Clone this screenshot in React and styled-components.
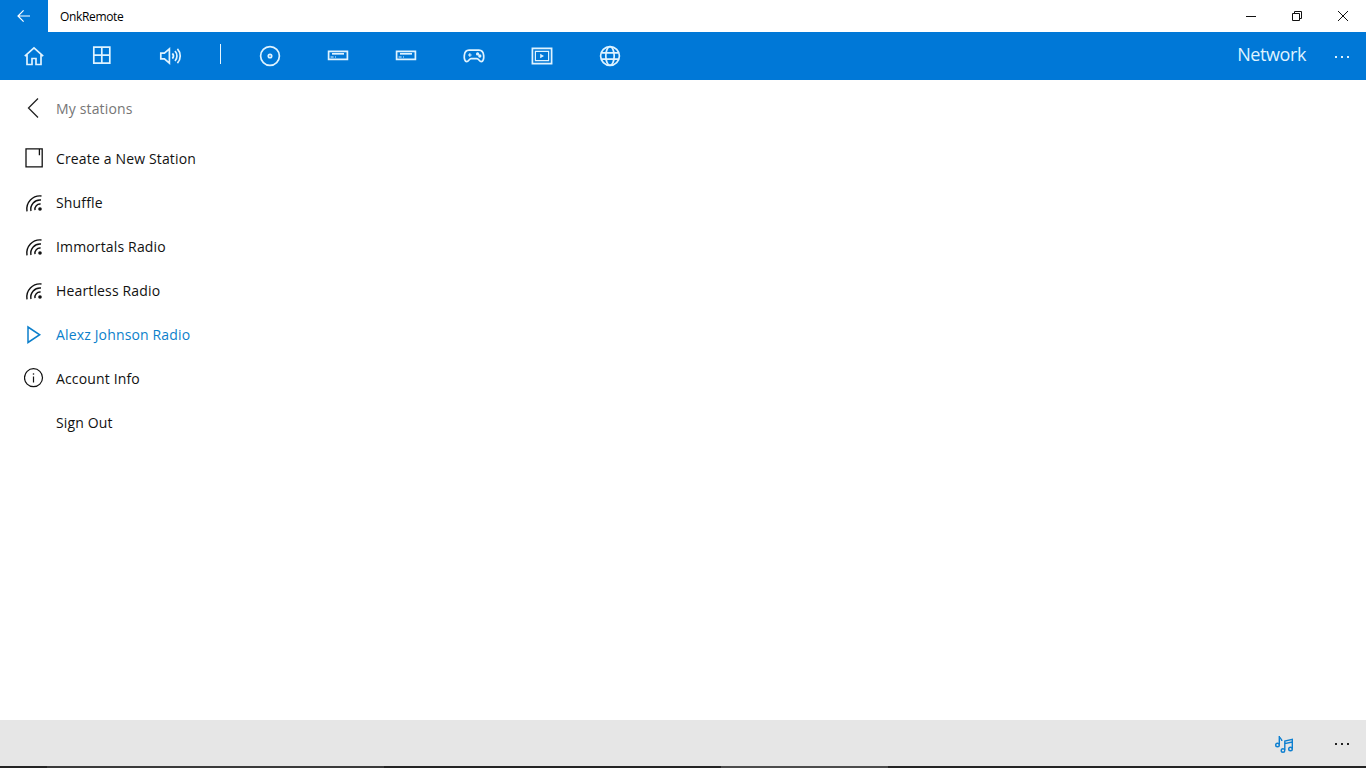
import React from "react";
import styled, { createGlobalStyle } from "styled-components";

const BLUE = "#0078d7";

const stations = ["Shuffle", "Immortals Radio", "Heartless Radio"];

const Line = ({ size = 24, vb = "0 0 24 24", width = 1.7, children }) => (
  <svg width={size} height={size} viewBox={vb} fill="none" stroke="currentColor" strokeWidth={width}>
    {children}
  </svg>
);

const HomeIcon = () => (
  <Line>
    <path d="M2.800 12.200 12 3.800l9.200 8.400M5 10.400v10.100h5v-6h4v6h5V10.400" />
  </Line>
);
const GridIcon = () => (
  <Line>
    <path d="M3.800 3.200h16v16h-16zM11.800 3.200v16M3.800 11.200h16" />
  </Line>
);
const SpeakerIcon = () => (
  <Line>
    <path d="M2.800 9.200h3.600l5-4.400v14.400l-5-4.400H2.800z" />
    <path d="M14.400 9.400a4 4 0 0 1 0 5.200M17 7a7.400 7.400 0 0 1 0 10M19.400 4.800a10.600 10.600 0 0 1 0 14.400" />
  </Line>
);
const DiscIcon = () => (
  <Line>
    <circle cx="12" cy="12" r="9.400" />
    <circle cx="12" cy="12" r="1.700" />
  </Line>
);
const TunerIcon = () => (
  <Line>
    <path d="M2.600 7.400h18.800v8H2.600z" />
    <path d="M6 9.800h12" />
    <path d="M4.600 13h3M9 13h1" strokeWidth="1" />
  </Line>
);
const GamepadIcon = () => (
  <Line>
    <path d="M7 6.200h10c2.600 0 4.400 2.400 4.700 5.400.3 2.800-.5 6-2.400 6-2 0-2.600-3-4.300-3H9c-1.700 0-2.300 3-4.300 3-1.900 0-2.700-3.200-2.400-6C2.600 8.600 4.400 6.200 7 6.200z" />
    <path d="M6 11h3.600M7.800 9.200v3.600" strokeWidth="1.200" />
    <circle cx="15.600" cy="9.900" r=".8" />
    <circle cx="17.800" cy="12" r=".8" />
  </Line>
);
const VideoIcon = () => (
  <Line>
    <path d="M2.400 4.400h19.200v15.200H2.400z" />
    <path d="M5.400 7.400h13.200v9.200H5.400z" strokeWidth="1.200" />
    <path d="M10.200 9.800v4.400l3.800-2.200z" fill="currentColor" stroke="none" />
  </Line>
);
const GlobeIcon = () => (
  <Line>
    <circle cx="12" cy="12" r="9.400" />
    <ellipse cx="12" cy="12" rx="4.200" ry="9.400" />
    <path d="M3.400 8.800h17.200M3.400 15.200h17.200" />
  </Line>
);
const BackArrow = () => (
  <Line size={16} vb="0 0 16 16" width={1.200}>
    <path d="M14 8H2.200M7.600 2.400 2 8l5.600 5.600" />
  </Line>
);
const MinimizeIcon = () => (
  <Line size={10} vb="0 0 10 10" width={1}>
    <path d="M0 5.500h10" />
  </Line>
);
const RestoreIcon = () => (
  <Line size={10} vb="0 0 10 10" width={1}>
    <path d="M.500 2.500h7v7h-7zM2.500 2.500v-2h7v7h-2" />
  </Line>
);
const CloseIcon = () => (
  <Line size={10} vb="0 0 10 10" width={1}>
    <path d="M0 0l10 10M10 0 0 10" />
  </Line>
);
const ChevronIcon = () => (
  <Line size={20} vb="0 0 20 20" width={1.300}>
    <path d="M14 .500 4.500 10l9.500 9.500" />
  </Line>
);
const NewStationIcon = () => (
  <Line size={20} vb="0 0 20 20" width={1.300}>
    <path d="M15.400 .800H2v18h16.200V.800h-2.800v6.400" />
  </Line>
);
const StationIcon = () => (
  <Line size={20} vb="0 0 20 20" width={1.400}>
    <path d="M11 18.200a5.200 5.200 0 0 1 5.600-6.200M7 19a9.200 9.200 0 0 1 10-11M3 19.400A13.200 13.200 0 0 1 17.500 4" />
    <circle cx="16" cy="17" r="1.800" fill="currentColor" stroke="none" />
  </Line>
);
const PlayIcon = () => (
  <Line size={20} vb="0 0 20 20" width={1.500}>
    <path d="M4 3v15.500l11.700-7.750z" />
  </Line>
);
const InfoIcon = () => (
  <Line size={20} vb="0 0 20 20" width={1.200}>
    <circle cx="9.500" cy="9.700" r="9" />
    <path d="M9.500 8.500v6" />
    <circle cx="9.500" cy="6" r=".8" fill="currentColor" stroke="none" />
  </Line>
);
const NotesIcon = () => (
  <Line size={20} vb="0 0 20 20" width={1.400}>
    <path d="M5.300 11.500V3c.3 2.200 2.400 2.600 2.600 5" />
    <circle cx="3.500" cy="12" r="1.800" />
    <path d="M10.800 17V8l7.500-1.600v9.300M10.800 10.600l7.500-1.600" />
    <circle cx="9" cy="17.500" r="1.800" />
    <circle cx="16.500" cy="16" r="1.800" />
  </Line>
);

const GlobalStyle = createGlobalStyle`
  html, body {
    margin: 0;
    height: 100%;
    overflow: hidden;
    background: #fff;
  }
  body {
    font-family: "Open Sans", "Noto Sans", "Liberation Sans", sans-serif;
  }
`;

const Page = styled.div`
  width: 1366px;
  height: 768px;
  display: flex;
  flex-direction: column;
`;

const TitleBar = styled.header`
  height: 32px;
  display: flex;
  align-items: center;
`;

const TitleBack = styled.div`
  width: 48px;
  height: 32px;
  background: ${BLUE};
  color: #fff;
  display: flex;
  align-items: center;
  justify-content: center;
`;

const AppName = styled.span`
  margin-left: 12px;
  font-size: 12px;
  letter-spacing: -0.350px;
  color: #000;
  flex: 1;
`;

const WindowButton = styled.div`
  width: 46px;
  height: 32px;
  display: flex;
  align-items: center;
  justify-content: center;
  color: #111;
`;

const NavBar = styled.nav`
  height: 48px;
  background: ${BLUE};
  color: #dff3ff;
  display: flex;
  align-items: center;
`;

const NavButton = styled.div`
  width: 68px;
  height: 48px;
  display: flex;
  align-items: center;
  justify-content: center;
`;

const NavSeparator = styled.div`
  width: 1px;
  height: 20px;
  margin: 0 15px 4px 16px;
  background: #e6f6ff;
`;

const NavTitle = styled.span`
  margin-left: auto;
  font-size: 18px;
  letter-spacing: -0.400px;
  color: #dff3ff;
  position: relative;
  top: -2px;
`;

const More = styled.div`
  width: 48px;
  margin-left: ${(p) => p.$gap || 0}px;
  margin-top: 2px;
  display: flex;
  justify-content: center;
  gap: 4px;
  color: ${(p) => p.$color};
`;

const Dot = styled.i`
  width: 2px;
  height: 2px;
  background: currentColor;
`;

const Content = styled.main`
  flex: 1;
  padding: 6px 0 0 24px;
`;

const Row = styled.div`
  height: 44px;
  display: flex;
  align-items: center;
  gap: 12px;
  font-size: 14px;
  letter-spacing: 0.150px;
  color: ${(p) => p.$color || "#111"};
`;

const Header = styled(Row)`
  margin-bottom: 6px;
`;

const RowIcon = styled.span`
  width: 20px;
  height: 20px;
  display: flex;
  color: ${(p) => p.$color || "inherit"};
`;

const Footer = styled.footer`
  height: 46px;
  background: #e6e6e6;
  display: flex;
  align-items: center;
  justify-content: flex-end;
`;

const FooterButton = styled.div`
  width: 20px;
  height: 20px;
  color: #0d7fd0;
  margin-right: 24px;
`;

const TaskStrip = styled.div`
  height: 2px;
  display: flex;
`;

const TaskSegment = styled.div`
  width: ${(p) => p.$w}px;
  background: ${(p) => p.$bg};
`;

const segments = [
  [47, "#242424"],
  [337, "#3a3a3a"],
  [337, "#242424"],
  [167, "#4c4c4c"],
  [478, "#242424"],
];

const Dots = ({ color, gap }) => (
  <More $color={color} $gap={gap}>
    <Dot />
    <Dot />
    <Dot />
  </More>
);

export default function App() {
  return (
    <Page>
      <GlobalStyle />
      <TitleBar>
        <TitleBack>
          <BackArrow />
        </TitleBack>
        <AppName>OnkRemote</AppName>
        <WindowButton>
          <MinimizeIcon />
        </WindowButton>
        <WindowButton>
          <RestoreIcon />
        </WindowButton>
        <WindowButton>
          <CloseIcon />
        </WindowButton>
      </TitleBar>
      <NavBar>
        <NavButton>
          <HomeIcon />
        </NavButton>
        <NavButton>
          <GridIcon />
        </NavButton>
        <NavButton>
          <SpeakerIcon />
        </NavButton>
        <NavSeparator />
        <NavButton>
          <DiscIcon />
        </NavButton>
        <NavButton>
          <TunerIcon />
        </NavButton>
        <NavButton>
          <TunerIcon />
        </NavButton>
        <NavButton>
          <GamepadIcon />
        </NavButton>
        <NavButton>
          <VideoIcon />
        </NavButton>
        <NavButton>
          <GlobeIcon />
        </NavButton>
        <NavTitle>Network</NavTitle>
        <Dots color="#dff3ff" gap={12} />
      </NavBar>
      <Content>
        <Header $color="#767676">
          <RowIcon $color="#222">
            <ChevronIcon />
          </RowIcon>
          My stations
        </Header>
        <Row>
          <RowIcon>
            <NewStationIcon />
          </RowIcon>
          Create a New Station
        </Row>
        {stations.map((name) => (
          <Row key={name}>
            <RowIcon>
              <StationIcon />
            </RowIcon>
            {name}
          </Row>
        ))}
        <Row $color="#0c7fcb">
          <RowIcon>
            <PlayIcon />
          </RowIcon>
          Alexz Johnson Radio
        </Row>
        <Row>
          <RowIcon>
            <InfoIcon />
          </RowIcon>
          Account Info
        </Row>
        <Row>
          <RowIcon />
          Sign Out
        </Row>
      </Content>
      <Footer>
        <FooterButton>
          <NotesIcon />
        </FooterButton>
        <Dots color="#222" />
      </Footer>
      <TaskStrip>
        {segments.map(([w, bg], i) => (
          <TaskSegment key={i} $w={w} $bg={bg} />
        ))}
      </TaskStrip>
    </Page>
  );
}
